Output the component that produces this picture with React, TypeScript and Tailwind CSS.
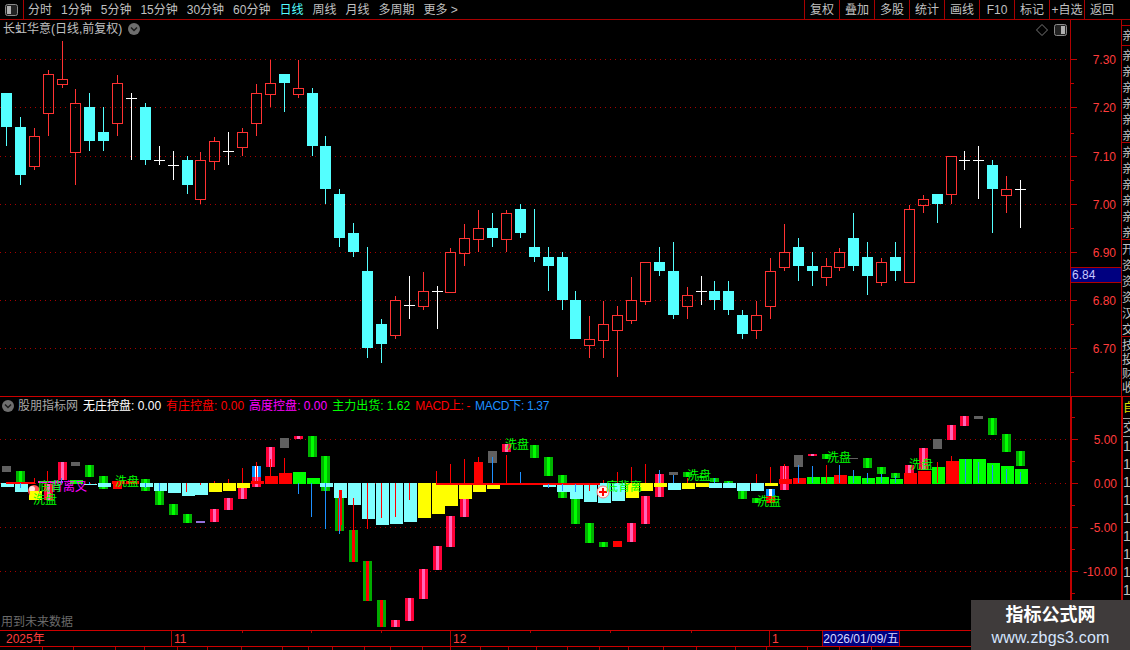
const cx = (i: number) => Math.floor(6.5 + 13.89 * i)

type Candle = [number, number, number, number, 'r' | 'c' | 'w']

// wick top, body top, body bottom, wick bottom, type
const candles: Candle[] = [
  [93, 93, 127, 146, 'c'], [117, 127, 175, 185, 'c'], [128, 136, 166, 170, 'r'], [70, 74, 113, 136, 'r'],
  [41, 79, 84, 88, 'r'], [89, 103, 152, 185, 'r'], [93, 107, 141, 151, 'c'], [107, 132, 141, 151, 'c'],
  [75, 83, 123, 136, 'r'], [93, 98, 98, 160, 'w'], [103, 107, 160, 165, 'c'], [146, 160, 160, 165, 'w'],
  [151, 165, 165, 180, 'w'], [156, 160, 185, 194, 'c'], [152, 160, 199, 204, 'r'], [137, 141, 161, 170, 'r'],
  [132, 151, 151, 165, 'w'], [128, 132, 147, 156, 'r'], [84, 93, 123, 136, 'r'], [60, 83, 94, 107, 'r'],
  [74, 74, 83, 112, 'c'], [60, 88, 94, 98, 'r'], [88, 93, 146, 156, 'c'], [136, 146, 189, 204, 'c'],
  [189, 194, 238, 247, 'c'], [223, 233, 252, 257, 'c'], [247, 271, 348, 358, 'c'], [319, 324, 344, 363, 'c'],
  [296, 300, 335, 339, 'r'], [276, 305, 305, 319, 'w'], [272, 291, 306, 310, 'r'], [286, 291, 291, 329, 'w'],
  [248, 252, 292, 292, 'r'], [224, 238, 253, 266, 'r'], [210, 228, 239, 252, 'r'], [213, 228, 238, 247, 'c'],
  [210, 213, 239, 252, 'r'], [204, 209, 233, 238, 'c'], [209, 247, 257, 262, 'c'], [247, 257, 266, 291, 'c'],
  [252, 257, 300, 310, 'c'], [291, 300, 339, 339, 'c'], [316, 339, 345, 358, 'r'], [301, 324, 340, 358, 'r'],
  [306, 315, 330, 377, 'r'], [277, 300, 320, 324, 'r'], [262, 262, 301, 305, 'r'], [247, 262, 271, 276, 'c'],
  [242, 271, 315, 319, 'c'], [287, 295, 306, 319, 'r'], [276, 291, 291, 305, 'w'], [281, 291, 300, 310, 'c'],
  [281, 291, 310, 315, 'c'], [310, 315, 334, 339, 'c'], [301, 315, 330, 339, 'r'], [258, 271, 306, 319, 'r'],
  [224, 252, 267, 271, 'r'], [238, 247, 266, 281, 'c'], [252, 266, 271, 286, 'c'], [258, 266, 277, 286, 'r'],
  [248, 252, 267, 271, 'r'], [213, 238, 266, 271, 'c'], [242, 257, 276, 295, 'c'], [258, 262, 282, 286, 'r'],
  [242, 257, 271, 281, 'c'], [205, 209, 282, 282, 'r'], [195, 199, 205, 213, 'r'], [194, 194, 204, 223, 'c'],
  [156, 156, 194, 204, 'r'], [151, 160, 160, 170, 'w'], [146, 160, 160, 199, 'w'], [160, 165, 189, 233, 'c'],
  [176, 189, 195, 213, 'r'], [180, 189, 189, 228, 'w'],
]

const histColors = { c: '#7fffff', y: '#ffff00', r: '#ff0000', g: '#00ff00' }

// index, top, bottom, colour
const hist: [number, number, number, keyof typeof histColors][] = [
  [0, 483, 487, 'c'], [1, 484, 492, 'c'], [2, 491, 500, 'y'], [5, 480, 484, 'g'], [6, 484, 485, 'c'], [7, 483, 487, 'c'],
  [8, 481, 484, 'r'], [9, 481, 484, 'r'], [10, 483, 487, 'c'], [11, 483, 491, 'c'], [12, 483, 493, 'c'], [13, 483, 496, 'c'],
  [14, 483, 495, 'c'], [15, 483, 492, 'y'], [16, 483, 491, 'y'], [17, 483, 488, 'y'], [18, 481, 484, 'r'], [19, 476, 484, 'r'],
  [20, 473, 484, 'r'], [21, 472, 484, 'g'], [22, 478, 484, 'g'], [23, 483, 487, 'c'], [24, 483, 498, 'c'], [25, 483, 505, 'c'],
  [26, 483, 519, 'c'], [27, 483, 525, 'c'], [28, 483, 524, 'c'], [29, 483, 522, 'c'], [30, 483, 518, 'y'], [31, 483, 514, 'y'],
  [32, 483, 506, 'y'], [33, 483, 499, 'y'], [34, 483, 492, 'y'], [35, 483, 489, 'y'], [39, 484, 487, 'c'], [40, 483, 492, 'c'],
  [41, 483, 499, 'c'], [42, 483, 502, 'c'], [43, 483, 503, 'c'], [44, 483, 501, 'c'], [45, 483, 498, 'y'], [46, 483, 491, 'y'],
  [47, 483, 487, 'y'], [48, 483, 490, 'c'], [49, 483, 489, 'y'], [50, 483, 487, 'y'], [51, 483, 488, 'c'], [52, 483, 488, 'c'],
  [53, 483, 491, 'c'], [54, 483, 491, 'c'], [55, 483, 486, 'y'], [56, 479, 484, 'r'], [57, 478, 484, 'r'], [58, 477, 484, 'g'],
  [59, 477, 484, 'g'], [60, 475, 484, 'r'], [61, 476, 484, 'g'], [62, 478, 484, 'g'], [63, 477, 484, 'g'], [64, 479, 484, 'g'],
  [65, 473, 484, 'r'], [66, 471, 484, 'r'], [67, 467, 484, 'g'], [68, 461, 484, 'r'], [69, 459, 484, 'g'], [70, 459, 484, 'g'],
  [71, 463, 484, 'g'], [72, 466, 484, 'g'], [73, 469, 484, 'g'],
]

type BarKind = 'green' | 'pink' | 'gray' | 'mix' | 'blue' | 'purple' | 'red'

// index, top, bottom, kind
const bars: [number, number, number, BarKind][] = [
  [0, 466, 472, 'gray'], [1, 471, 483, 'green'], [3, 484, 500, 'pink'], [4, 462, 480, 'pink'], [5, 462, 466, 'gray'],
  [6, 465, 477, 'green'], [7, 476, 489, 'green'], [8, 481, 489, 'red'], [10, 479, 491, 'green'], [11, 491, 505, 'green'],
  [12, 504, 515, 'green'], [13, 514, 523, 'green'], [14, 521, 523, 'purple'], [15, 509, 522, 'pink'], [16, 498, 510, 'pink'],
  [17, 488, 499, 'pink'], [18, 477, 487, 'pink'], [18, 466, 477, 'blue'], [19, 447, 467, 'pink'], [20, 438, 448, 'gray'],
  [21, 436, 439, 'pink'], [22, 436, 457, 'green'], [23, 456, 491, 'green'], [24, 490, 531, 'mix'], [25, 530, 562, 'mix'],
  [26, 561, 601, 'mix'], [27, 600, 627, 'mix'], [28, 620, 627, 'pink'], [29, 598, 621, 'pink'], [30, 569, 599, 'pink'],
  [31, 546, 570, 'pink'], [32, 516, 547, 'pink'], [33, 499, 517, 'pink'], [34, 462, 483, 'red'], [35, 451, 463, 'gray'],
  [36, 444, 452, 'pink'], [38, 445, 458, 'green'], [39, 457, 476, 'green'], [40, 475, 498, 'green'], [41, 499, 524, 'green'],
  [42, 523, 543, 'green'], [43, 542, 547, 'green'], [44, 541, 547, 'red'], [45, 523, 542, 'pink'], [46, 496, 524, 'pink'],
  [47, 474, 497, 'pink'], [48, 472, 475, 'gray'], [49, 472, 477, 'green'], [50, 476, 478, 'green'], [51, 478, 482, 'green'],
  [52, 481, 483, 'green'], [53, 491, 499, 'green'], [54, 498, 503, 'green'], [55, 496, 503, 'red'], [55, 489, 496, 'blue'],
  [56, 466, 490, 'pink'], [57, 455, 467, 'gray'], [58, 454, 456, 'pink'], [59, 454, 459, 'green'], [61, 458, 459, 'gray'],
  [62, 458, 468, 'green'], [63, 467, 474, 'green'], [64, 473, 478, 'green'], [65, 465, 473, 'pink'], [66, 448, 470, 'pink'],
  [67, 439, 449, 'gray'], [68, 425, 440, 'pink'], [69, 416, 426, 'pink'], [70, 416, 419, 'gray'], [71, 418, 435, 'green'],
  [72, 434, 452, 'green'], [73, 451, 466, 'green'],
]

const barBands: Record<BarKind, [string, string]> = {
  green: ['#00b400', '#00ff00'],
  pink: ['#ff0038', '#ff66b8'],
  gray: ['#606060', '#606060'],
  mix: ['#00aa00', '#ff0000'],
  blue: ['#0090ff', '#ffffff'],
  purple: ['#9370db', '#9370db'],
  red: ['#ff0000', '#ff0000'],
}

// x, top, bottom
const blueLines: [number, number, number][] = [
  [20, 483, 488], [61, 478, 483], [89, 482, 484], [145, 483, 488], [159, 483, 491], [298, 483, 494], [311, 483, 517],
  [325, 483, 529], [339, 498, 534], [492, 457, 483], [520, 472, 483], [548, 484, 488], [562, 484, 491], [575, 484, 492],
  [659, 470, 483], [673, 475, 483], [714, 478, 483], [728, 482, 483], [798, 465, 483], [812, 466, 483], [839, 465, 483],
  [853, 470, 483], [867, 473, 483], [881, 474, 483], [895, 476, 483], [965, 459, 483], [978, 462, 483], [992, 465, 483],
  [1006, 469, 483], [1020, 472, 483],
]

const redLines: [number, number, number][] = [
  [34, 478, 483], [47, 471, 483], [186, 483, 492], [200, 483, 485], [214, 481, 483], [228, 479, 483], [242, 468, 483],
  [256, 462, 483], [270, 459, 477], [284, 458, 475], [353, 498, 530], [367, 483, 529], [381, 483, 518], [395, 483, 517],
  [409, 483, 500], [436, 471, 483], [450, 464, 483], [464, 459, 483], [478, 457, 483], [506, 455, 483], [589, 484, 491],
  [603, 480, 483], [617, 472, 483], [631, 467, 483], [645, 464, 483], [687, 478, 483], [756, 474, 483], [770, 467, 483],
  [784, 464, 483], [826, 465, 483], [937, 462, 483], [951, 456, 461],
]

// text, x, baseline
const greenNotes: [string, number, number][] = [
  ['洗盘', 115, 486], ['洗盘', 33, 504], ['底背', 38, 491], ['洗盘', 505, 449], ['底背离', 606, 491],
  ['洗盘', 687, 480], ['洗盘', 757, 506], ['洗盘', 827, 462], ['洗盘', 909, 469],
]

const navItems = ['分时', '1分钟', '5分钟', '15分钟', '30分钟', '60分钟', '日线', '周线', '月线', '多周期', '更多 >']
const toolItems = ['复权', '叠加', '多股', '统计', '画线', 'F10', '标记', '+自选', '返回']

const legend: [string, string, string][] = [
  ['无庄控盘', '0.00', 'text-white'],
  ['有庄控盘', '0.00', 'text-[#ff0000]'],
  ['高度控盘', '0.00', 'text-[#ff00ff]'],
  ['主力出货', '1.62', 'text-[#00ff00]'],
  ['MACD上', '-', 'text-[#ff0000] tracking-[-0.4px]'],
  ['MACD下', '1.37', 'text-[#1e90ff] tracking-[-0.3px]'],
]

const tabStops = [42, 73, 115, 144, 177, 207, 241, 282, 308, 332, 364, 390, 422, 450, 480, 508, 536, 567, 599, 628, 663, 696, 735, 766, 807, 839, 871]

const upperTabs = [
  { chars: '亲', h: 'h-[20px]' },
  { chars: '亲亲亲亲亲亲', h: 'h-[97px]' },
  { chars: '亲亲亲亲亲亲', h: 'h-[97px]' },
  { chars: '开资资资汉交', h: 'h-[97px]' },
]

function CircleChevron() {
  return (
    <svg width="12" height="12" viewBox="0 0 12 12" className="shrink-0">
      <circle cx="6" cy="6" r="6" fill="#6e6e6e" />
      <path d="M3 4.5 L6 7.5 L9 4.5" fill="none" stroke="#1a1a1a" strokeWidth="1.5" />
    </svg>
  )
}

function PanelToggle({ fillSide }: { fillSide: 'left' | 'right' }) {
  return (
    <svg width="13" height="12" viewBox="0 0 13 12">
      <rect x="0.5" y="0.5" width="12" height="11" rx="2" fill="#222" stroke="#8a8a8a" />
      <rect x={fillSide === 'right' ? 7 : 2} y="2" width="4" height="8" fill="#b0b0b0" />
    </svg>
  )
}

function PriceChart() {
  return (
    <svg width="1070" height="376" viewBox="0 20 1070 376" shapeRendering="crispEdges" className="block">
      {[59, 107, 156, 204, 252, 300, 348].map((y) => (
        <line key={y} x1="0" x2="1070" y1={y + 0.5} y2={y + 0.5} stroke="#a80000" strokeDasharray="1 4" />
      ))}
      {candles.map(([wt, bt, bb, wb, t], i) => {
        const x = cx(i)
        const color = t === 'r' ? '#ff3232' : t === 'c' ? '#54ffff' : '#ffffff'
        if (t === 'w') {
          return (
            <g key={i} fill={color}>
              <rect x={x} y={wt} width="1" height={wb - wt} />
              <rect x={x - 5} y={bt} width="11" height="1" />
            </g>
          )
        }
        return (
          <g key={i}>
            <rect x={x} y={wt} width="1" height={Math.max(bt - wt, 0)} fill={color} />
            <rect x={x} y={bb} width="1" height={Math.max(wb - bb, 0)} fill={color} />
            {t === 'c' ? (
              <rect x={x - 5} y={bt} width="11" height={bb - bt} fill={color} />
            ) : (
              <rect x={x - 4.5} y={bt + 0.5} width="10" height={bb - bt} fill="none" stroke={color} />
            )}
          </g>
        )
      })}
    </svg>
  )
}

function IndicatorChart() {
  return (
    <svg width="1070" height="233" viewBox="0 397 1070 233" className="block">
      <g shapeRendering="crispEdges">
        {[439, 483, 527, 571].map((y) => (
          <line key={y} x1="0" x2="1070" y1={y + 0.5} y2={y + 0.5} stroke="#a80000" strokeDasharray="1 4" />
        ))}
        {bars.map(([i, top, bottom, kind], n) => {
          const x = cx(i)
          const [edge, mid] = barBands[kind]
          return (
            <g key={n}>
              <rect x={x - 4} y={top} width="9" height={bottom - top} fill={edge} />
              <rect x={x - 1} y={top} width="3" height={bottom - top} fill={mid} />
            </g>
          )
        })}
        {hist.map(([i, top, bottom, c]) => (
          <rect key={i} x={cx(i) - 5} y={top} width="13" height={bottom - top} fill={histColors[c]} />
        ))}
        <rect x="339" y="490" width="3" height="35" fill="#ff0000" />
        <rect x="436" y="483" width="164" height="2" fill="#ff0000" />
        <rect x="6" y="482" width="29" height="2" fill="#ff0000" />
        <rect x="38" y="481" width="25" height="2" fill="#ff00ff" />
        {blueLines.map(([x, top, bottom]) => (
          <rect key={x} x={x} y={top} width="1" height={bottom - top} fill="#1e90ff" />
        ))}
        {redLines.map(([x, top, bottom]) => (
          <rect key={x} x={x} y={top} width="1" height={bottom - top} fill="#ff0000" />
        ))}
      </g>
      <circle cx="34" cy="491" r="6" fill="#ff5050" />
      <circle cx="32" cy="489" r="3" fill="#ffe0e0" />
      <rect x="30" y="491" width="9" height="9" fill="#ffff00" />
      <circle cx="603" cy="492" r="6" fill="#fff0f0" stroke="#ff8080" />
      <path d="M603 488 V496 M599 492 H607" stroke="#ff0000" strokeWidth="2" />
      <text x="51" y="491" fontSize="12" fill="#ff00ff">背离叉</text>
      {greenNotes.map(([label, x, y]) => (
        <text key={`${x}-${y}`} x={x} y={y} fontSize="12" fill="#00ff00">{label}</text>
      ))}
    </svg>
  )
}

function Axis({ top, height, labels, minor }: { top: number; height: number; labels: [string, number][]; minor: number[] }) {
  return (
    <svg width="50" height={height} viewBox={`0 ${top} 50 ${height}`} className="block">
      <g shapeRendering="crispEdges">
        {labels.map(([, y]) => <rect key={y} x="0" y={y} width="6" height="1" fill="#c00000" />)}
        {minor.map((y) => <rect key={y} x="0" y={y} width="3" height="1" fill="#c00000" />)}
      </g>
      {labels.map(([label, y]) => (
        <text key={y} x="45" y={y + 5} textAnchor="end" fontSize="12" fill="#ff3c3c">{label}</text>
      ))}
    </svg>
  )
}

export default function App() {
  return (
    <div className="relative flex flex-col w-[1130px] h-[650px] overflow-hidden bg-black text-[12px] leading-none text-[#c0c0c0] [font-family:'Liberation_Sans','Noto_Sans_CJK_SC',sans-serif]">
      {/* Top toolbar */}
      <div className="flex items-stretch h-[20px] shrink-0 border-b border-[#a80000]">
        <div className="flex items-center justify-center w-[24px] border-r border-[#a80000]">
          <PanelToggle fillSide="left" />
        </div>
        <div className="flex items-center gap-[9px] pl-[4px]">
          {navItems.map((item) => (
            <span key={item} className={item === '日线' ? 'text-[#54ffff]' : ''}>{item}</span>
          ))}
        </div>
        <div className="flex ml-auto pr-[11px]">
          {toolItems.map((item) => (
            <span key={item} className="flex items-center justify-center w-[35px] border-l border-[#a80000]">{item}</span>
          ))}
        </div>
      </div>

      {/* Price panel */}
      <div className="flex h-[377px] shrink-0 border-b border-[#cc0000]">
        <div className="relative w-[1070px]">
          <PriceChart />
          <div className="absolute left-[3px] top-[2px] flex items-center gap-[6px] h-[14px]">
            <span>长虹华意(日线,前复权)</span>
            <CircleChevron />
          </div>
          <div className="absolute right-[3px] top-[4px] flex items-center gap-[6px]">
            <svg width="12" height="12" viewBox="0 0 12 12">
              <path d="M6 0.5 L11.5 6 L6 11.5 L0.5 6 Z" fill="none" stroke="#777" />
            </svg>
            <PanelToggle fillSide="right" />
          </div>
        </div>
        <div className="relative w-[51px] border-l border-[#b00000]">
          <Axis
            top={20}
            height={376}
            labels={[['7.30', 59], ['7.20', 107], ['7.10', 156], ['7.00', 204], ['6.90', 252], ['6.80', 300], ['6.70', 348]]}
            minor={[83, 133, 180, 228, 276, 324, 372]}
          />
          <div className="absolute left-0 top-[247px] flex items-center w-full h-[16px] pl-[1px] bg-[#000080] border-y border-[#b00000] text-[#c8c8ff]">
            6.84
          </div>
        </div>
        <div className="flex flex-col w-[9px] pt-[5px] border-l border-[#b00000] overflow-hidden">
          {upperTabs.map((tab, n) => (
            <div key={n} className={`${tab.h} shrink-0 border-t border-[#b00000] pt-[2px] overflow-hidden`}>
              {tab.chars.split('').map((c, k) => (
                <div key={k} className="h-[16px] leading-[16px] whitespace-nowrap">{c}</div>
              ))}
            </div>
          ))}
          <div className="flex-1 border-t border-[#b00000] pt-[2px]">
            {'技投财收'.split('').map((c, k) => (
              <div key={k} className="h-[14px] leading-[14px]">{c}</div>
            ))}
          </div>
        </div>
      </div>

      {/* Indicator panel */}
      <div className="flex h-[234px] shrink-0 border-b border-[#cc0000]">
        <div className="relative w-[1070px]">
          <IndicatorChart />
          <div className="absolute left-[2px] top-[3px] flex items-center h-[12px] whitespace-nowrap">
            <CircleChevron />
            <span className="ml-[4px] mr-[5px] text-[#a8a8a8]">股朋指标网</span>
            <div className="flex gap-[5px]">
              {legend.map(([name, value, color]) => (
                <span key={name} className={color}>{name}: {value}</span>
              ))}
            </div>
          </div>
          <span className="absolute left-[1px] bottom-[2px] text-[#6a6a6a]">用到未来数据</span>
        </div>
        <div className="w-[51px] border-l-2 border-[#c00000]">
          <Axis
            top={397}
            height={233}
            labels={[['5.00', 439], ['0.00', 483], ['-5.00', 527], ['-10.00', 571]]}
            minor={[417, 461, 505, 549, 593]}
          />
        </div>
        <div className="flex flex-col w-[9px] border-l-2 border-[#c00000] overflow-hidden">
          <div className="h-[21px] shrink-0 pt-[5px] text-[#e0e000]">自</div>
          <div className="h-[19px] shrink-0 pt-[3px] border-y border-[#a0a0a0] text-[#c0c0c0]">交</div>
          {Array.from({ length: 9 }).map((_, k) => (
            <div key={k} className="h-[18px] shrink-0 flex items-center text-[14px] text-[#c0c0c0]">1</div>
          ))}
        </div>
      </div>

      {/* Date axis */}
      <div className="relative flex h-[16px] shrink-0 border-b border-[#cc0000] text-[#ff3c3c]">
        <div className="w-[171px] pl-[6px] pt-[2px]">2025年</div>
        <div className="relative w-[279px] pl-[2px] pt-[2px] border-l border-[#b00000]">
          11
          <span className="absolute left-[70px] top-0 w-px h-[2px] bg-[#b00000]" />
          <span className="absolute left-[139px] top-0 w-px h-[2px] bg-[#b00000]" />
          <span className="absolute left-[209px] top-0 w-px h-[2px] bg-[#b00000]" />
        </div>
        <div className="relative w-[319px] pl-[2px] pt-[2px] border-l border-[#b00000]">
          12
          <span className="absolute left-[79px] top-0 w-px h-[2px] bg-[#b00000]" />
          <span className="absolute left-[159px] top-0 w-px h-[2px] bg-[#b00000]" />
          <span className="absolute left-[240px] top-0 w-px h-[2px] bg-[#b00000]" />
        </div>
        <div className="flex-1 pl-[2px] pt-[2px] border-l border-[#b00000]">1</div>
        <div className="absolute left-[822px] top-0 flex items-center justify-center w-[78px] h-[15px] bg-[#000080] border-x border-[#b00000] text-[#d8d8ff]">
          2026/01/09/五
        </div>
      </div>

      {/* Bottom tabs, cut off by the window */}
      <div className="relative flex-1">
        {tabStops.map((x) => (
          <span key={x} className="absolute top-0 w-px h-full bg-[#b00000]" style={{ left: x }} />
        ))}
      </div>

      {/* Watermark */}
      <div className="absolute right-0 bottom-0 flex flex-col items-center w-[159px] h-[50px] pt-[5px] bg-[#3f3b3b]">
        <span className="text-[18px] leading-[20px] font-bold text-white">指标公式网</span>
        <span className="mt-[4px] text-[16px] leading-[18px] tracking-[0.2px] text-[#d6e6ff]">www.zbgs3.com</span>
      </div>
    </div>
  )
}
